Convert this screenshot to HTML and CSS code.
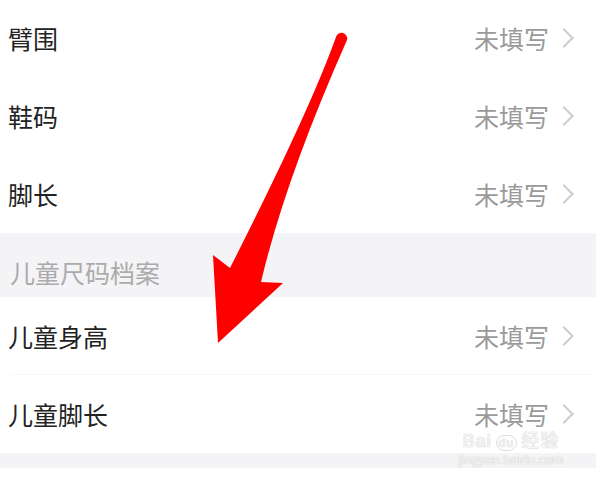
FILE: index.html
```html
<!DOCTYPE html>
<html lang="zh-CN">
<head>
  <meta charset="UTF-8">
  <meta name="viewport" content="width=device-width, initial-scale=1.0">
  <title>尺码档案</title>
  <link rel="stylesheet" href="styles.css">
</head>
<body>
  <div class="list">
    <div class="row"><span class="label">臂围</span><span class="value">未填写<i class="chev"></i></span></div>
    <div class="row"><span class="label">鞋码</span><span class="value">未填写<i class="chev"></i></span></div>
    <div class="row"><span class="label">脚长</span><span class="value">未填写<i class="chev"></i></span></div>
  </div>
  <div class="section">儿童尺码档案</div>
  <div class="list">
    <div class="row line"><span class="label">儿童身高</span><span class="value">未填写<i class="chev"></i></span></div>
    <div class="row"><span class="label">儿童脚长</span><span class="value">未填写<i class="chev"></i></span></div>
  </div>
  <div class="gap"></div>

  <!-- 红色箭头 -->
  <svg class="arrow" width="596" height="482" viewBox="0 0 596 482">
    <path d="M336 37 Q310 110 230 268 L213 255 L218 343 L283 283 L261 282 Q285 180 347 40 A5.5 5.5 0 0 0 336 37 Z" fill="#fe0000"/>
  </svg>

  <div class="watermark">
    <div class="wm-top">Bai<span class="paw">du</span>经验</div>
    <div class="wm-url">jingyan.baidu.com</div>
  </div>
</body>
</html>
```

FILE: styles.css
```css
body {
  margin: 0;
  background: #fff;
  font-family: "Noto Sans CJK SC", "Noto Sans", sans-serif;
  overflow: hidden;
  position: relative;
  height: 482px;
}
.list {
  background: #fff;
}
.list:first-child {
  margin-top: -1px;
}
.row {
  height: 78px;
  display: flex;
  align-items: center;
  justify-content: space-between;
  padding: 0 22px 0 8px;
  box-sizing: border-box;
  position: relative;
}
.row.line::after {
  content: "";
  position: absolute;
  left: 10px;
  right: 0;
  bottom: 0;
  height: 1px;
  background: #f7f7f7;
}
.label {
  font-size: 25px;
  line-height: 30px;
  color: #222;
}
.value {
  display: flex;
  align-items: center;
  font-size: 25px;
  line-height: 30px;
  color: #9a9a9a;
}
.chev {
  display: block;
  width: 12px;
  height: 12px;
  border-top: 2px solid #cdcdcd;
  border-right: 2px solid #cdcdcd;
  transform: rotate(45deg);
  margin-left: 8px;
  margin-right: 3px;
}
.section {
  height: 64px;
  box-sizing: border-box;
  background: #f4f4f6;
  padding: 23px 10px 9px;
  line-height: 32px;
  font-size: 25px;
  color: #ababab;
}
.gap {
  height: 15px;
  background: #f4f4f6;
}
.arrow {
  position: absolute;
  left: 0;
  top: 0;
}
.watermark {
  position: absolute;
  left: 456px;
  top: 433px;
  width: 110px;
  text-align: center;
  color: rgba(255, 255, 255, 0.85);
  text-shadow: 0 0 1px #c8c8c8, 0 0 1px #c8c8c8;
  font-family: "Liberation Sans", "Noto Sans CJK SC", sans-serif;
}
.wm-top {
  font-size: 18px;
  line-height: 16px;
  letter-spacing: 1px;
}
.paw {
  font-size: 12px;
  margin: 0 4px;
  border: 1px solid #ddd;
  border-radius: 8px;
  padding: 0 2px;
}
.wm-url {
  font-size: 13px;
  line-height: 17px;
}
```
